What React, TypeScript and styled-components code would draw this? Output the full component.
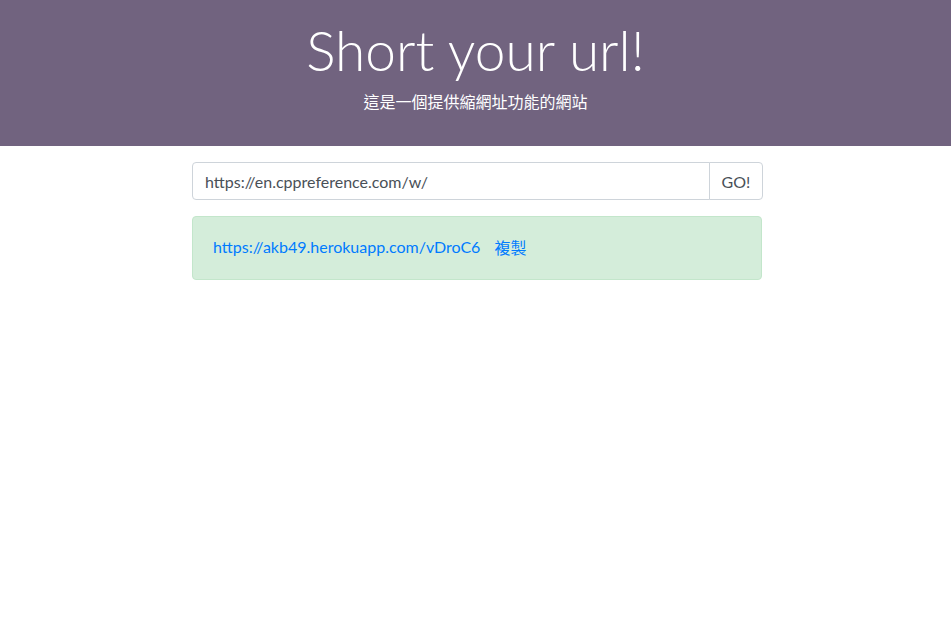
import * as React from 'react';
import styled, { createGlobalStyle } from 'styled-components';

const GlobalStyle = createGlobalStyle`
  html, body {
    margin: 0;
    padding: 0;
    background: #fff;
    font-family: Lato, "Noto Sans CJK TC", sans-serif;
    font-size: 16px;
    color: #212529;
  }
  * { box-sizing: border-box; }
`;

export default function App() {
  const [url, setUrl] = React.useState('https://en.cppreference.com/w/');
  const shortUrl = 'https://akb49.herokuapp.com/vDroC6';

  return (
    <>
      <GlobalStyle />
      <Header>
        <Title>Short your url!</Title>
        <Lead>這是一個提供縮網址功能的網站</Lead>
      </Header>

      <Container>
        <InputGroup>
          <UrlInput value={url} onChange={(e) => setUrl(e.target.value)} />
          <GoButton>GO!</GoButton>
        </InputGroup>

        <Alert>
          <Link href={shortUrl}>{shortUrl}</Link>
          <CopyLink href="#">複製</CopyLink>
        </Alert>
      </Container>
    </>
  );
}

const Header = styled.header`
  height: 146px;
  background: #71637f;
  color: #fff;
  text-align: center;
  padding-top: 17px;
`;

const Title = styled.h1`
  margin: 0;
  font-family: Lato, sans-serif;
  font-weight: 300;
  font-size: 55px;
  line-height: 67px;
`;

const Lead = styled.p`
  margin: 6px 0 0;
  font-family: Lato, "Noto Sans CJK TC", sans-serif;
  font-size: 16px;
  line-height: 24px;
`;

const Container = styled.main`
  width: 571px;
  margin: 16px auto 0;
  position: relative;
  left: 2px;
`;

const InputGroup = styled.div`
  display: flex;
  height: 38px;
`;

const UrlInput = styled.input`
  flex: 1;
  height: 38px;
  padding: 6px 12px;
  border: 1px solid #ced4da;
  border-radius: 4px 0 0 4px;
  font-family: Lato, sans-serif;
  font-size: 16px;
  color: #495057;
  outline: none;
`;

const GoButton = styled.button`
  width: 54px;
  height: 38px;
  margin-left: -1px;
  border: 1px solid #ced4da;
  border-radius: 0 4px 4px 0;
  background: #fff;
  font-family: Lato, sans-serif;
  font-size: 16px;
  color: #495057;
  cursor: pointer;
`;

const Alert = styled.div`
  margin-top: 16px;
  margin-right: 1px;
  height: 64px;
  display: flex;
  align-items: center;
  padding: 0 20px 3px;
  background: #d4edda;
  border: 1px solid #c3e6cb;
  border-radius: 4px;
`;

const Link = styled.a`
  color: #007bff;
  text-decoration: none;
  font-size: 16px;
`;

const CopyLink = styled(Link)`
  margin-left: 14px;
  font-family: "Noto Sans CJK TC", sans-serif;
  font-size: 16px;
`;
